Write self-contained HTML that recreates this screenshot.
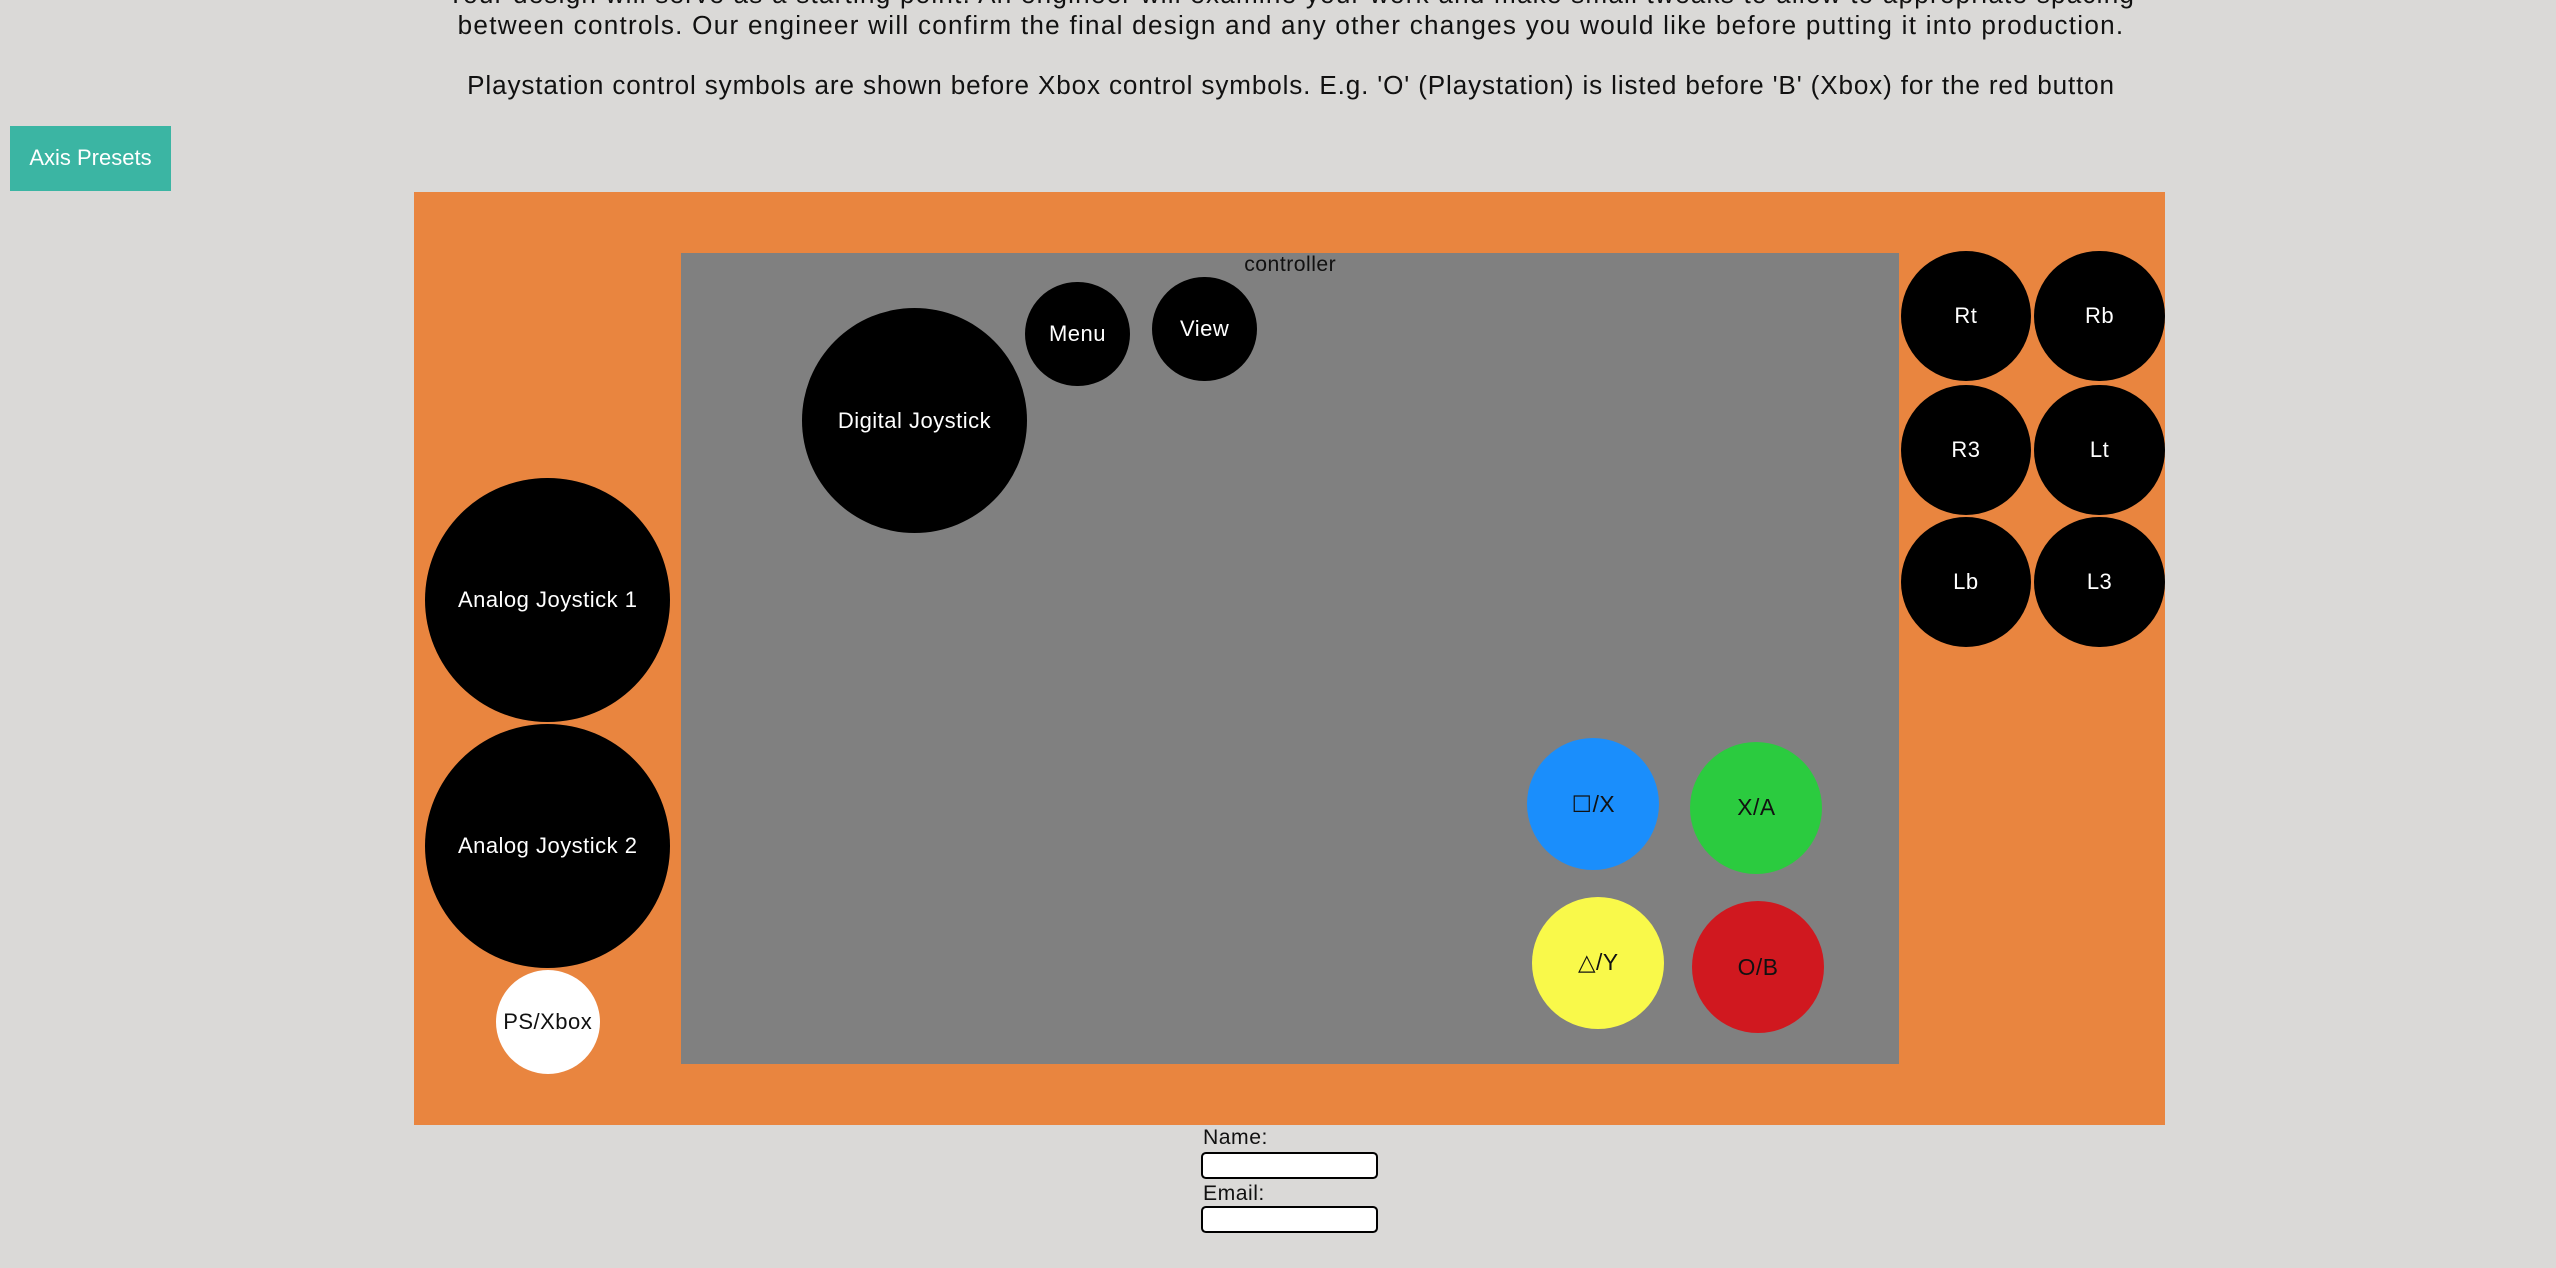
<!DOCTYPE html>
<html><head><meta charset="utf-8"><style>
html,body{margin:0;padding:0;background:#dad9d7;overflow:hidden}
#w{position:relative;width:1568px;height:778px;zoom:1.6301;font-family:"Liberation Sans","DejaVu Sans",sans-serif;color:#111}
.t{position:absolute;left:0;width:1584px;text-align:center;font-size:16px;white-space:nowrap;letter-spacing:0.7px}
.c{position:absolute;border-radius:50%;background:#000;color:#fff;display:flex;align-items:center;justify-content:center;font-size:13.5px;white-space:nowrap;letter-spacing:0.3px}
.b{color:#111;font-size:14px}
</style></head><body><div id="w">
<div class="t" style="top:-13px;letter-spacing:0.75px">Your design will serve as a starting point. An engineer will examine your work and make small tweaks to allow to appropriate spacing</div>
<div class="t" style="top:6px;letter-spacing:0.78px">between controls. Our engineer will confirm the final design and any other changes you would like before putting it into production.</div>
<div class="t" style="top:43px;letter-spacing:0.53px">Playstation control symbols are shown before Xbox control symbols. E.g. 'O' (Playstation) is listed before 'B' (Xbox) for the red button</div>
<div style="position:absolute;left:6px;top:77px;width:99px;height:40px;background:#3bb5a3;color:#fff;font-size:13.5px;display:flex;align-items:center;justify-content:center">Axis Presets</div>
<div style="position:absolute;left:254px;top:118px;width:1074px;height:572px;background:#e9853f"></div>
<div style="position:absolute;left:418px;top:155px;width:747px;height:498px;background:#808080"></div>
<div style="position:absolute;left:418px;top:155px;width:747px;text-align:center;font-size:13px;color:#111;letter-spacing:0.3px">controller</div>
<div class="c" style="left:492px;top:189px;width:138px;height:138px">Digital Joystick</div>
<div class="c" style="left:629px;top:173px;width:64px;height:64px">Menu</div>
<div class="c" style="left:707px;top:170px;width:64px;height:64px">View</div>
<div class="c" style="left:261px;top:293px;width:150px;height:150px">Analog Joystick 1</div>
<div class="c" style="left:261px;top:444px;width:150px;height:150px">Analog Joystick 2</div>
<div class="c" style="left:304px;top:595px;width:64px;height:64px;background:#fff;color:#111">PS/Xbox</div>
<div class="c" style="left:1166px;top:154px;width:80px;height:80px">Rt</div>
<div class="c" style="left:1248px;top:154px;width:80px;height:80px">Rb</div>
<div class="c" style="left:1166px;top:236px;width:80px;height:80px">R3</div>
<div class="c" style="left:1248px;top:236px;width:80px;height:80px">Lt</div>
<div class="c" style="left:1166px;top:317px;width:80px;height:80px">Lb</div>
<div class="c" style="left:1248px;top:317px;width:80px;height:80px">L3</div>
<div class="c b" style="left:937px;top:453px;width:81px;height:81px;background:#1a8efc">☐/X</div>
<div class="c b" style="left:1037px;top:455px;width:81px;height:81px;background:#2bcb3f">X/A</div>
<div class="c b" style="left:940px;top:550px;width:81px;height:81px;background:#f9f94a"><b>△</b>/Y</div>
<div class="c b" style="left:1038px;top:553px;width:81px;height:81px;background:#d0181f">O/B</div>
<div style="position:absolute;left:738px;top:691px;font-size:13px;letter-spacing:0.3px">Name:</div>
<div style="position:absolute;left:737px;top:707px;width:106px;height:14px;border:1.5px solid #000;border-radius:3px;background:#fff"></div>
<div style="position:absolute;left:738px;top:725px;font-size:13px;letter-spacing:0.3px">Email:</div>
<div style="position:absolute;left:737px;top:740px;width:106px;height:14px;border:1.5px solid #000;border-radius:3px;background:#fff"></div>
</div></body></html>
